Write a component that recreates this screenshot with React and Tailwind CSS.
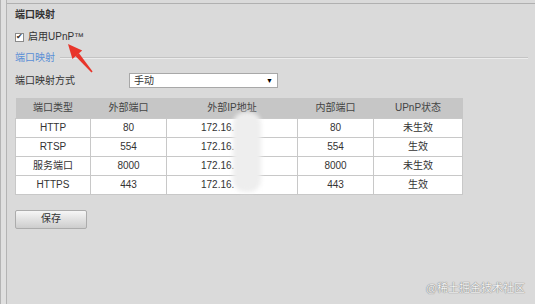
import React from "react";

const rows = [
  { type: "HTTP", ext: "80", ip: "172.16.", inner: "80", status: "未生效" },
  { type: "RTSP", ext: "554", ip: "172.16.", inner: "554", status: "生效" },
  { type: "服务端口", ext: "8000", ip: "172.16.", inner: "8000", status: "未生效" },
  { type: "HTTPS", ext: "443", ip: "172.16.", inner: "443", status: "生效" },
];

const font = { fontFamily: '"Liberation Sans", "Noto Sans CJK SC", sans-serif' };

// red annotation arrow pointing at the UPnP checkbox
const Arrow = () => (
  <svg className="absolute left-[62px] top-[38px]" width="36" height="40" viewBox="0 0 36 40">
    <polygon points="13.4,18.1 16.8,15.1 30.6,33.4 29.4,34.6" fill="#e8352a" />
    <polygon points="6,6 20.2,12.4 10.4,21" fill="#e8352a" />
  </svg>
);

export default function App() {
  return (
    <div
      className="relative flex w-[535px] h-[304px] bg-[#dadada] text-[#333] overflow-hidden"
      style={font}
    >
      {/* left frame edge */}
      <div className="w-[7px] h-full border-l border-r border-[#b4b4b4] bg-[#e0e0e0]" />

      <div className="flex-1 mt-[3px] border-t border-[#b0b0b0] pl-[8px]">
        <div className="mt-[4px] h-[14px] leading-[14px] text-[10px] font-bold">端口映射</div>

        <div className="mt-[8px] flex items-center h-[14px] gap-[4px]">
          <div className="w-[9px] h-[9px] border border-[#8a8a8a] bg-white flex items-center justify-center text-[8px] leading-none">
            ✔
          </div>
          <span className="text-[10px] leading-[14px]">启用UPnP™</span>
        </div>

        <div className="mt-[7px] flex items-center h-[14px]">
          <span className="text-[10px] leading-[14px] text-[#5a8fd6]">端口映射</span>
          <div className="ml-[5px] mr-[7px] flex-1 border-t border-[#c4c4c4] border-b border-b-[#ececec]" />
        </div>

        <div className="mt-[8px] flex items-center h-[15px]">
          <span className="w-[114px] text-[10px] leading-[14px]">端口映射方式</span>
          <div className="w-[149px] h-[15px] bg-white border border-[#a8a8a8] flex items-center justify-between px-[4px]">
            <span className="text-[10px] leading-none">手动</span>
            <span className="text-[7px] leading-none text-black">▼</span>
          </div>
        </div>

        <div className="relative mt-[10px] w-[447px]">
          <table className="border-collapse text-[10px] text-center table-fixed w-[447px]">
            <colgroup>
              <col className="w-[75px]" />
              <col className="w-[76px]" />
              <col className="w-[131px]" />
              <col className="w-[76px]" />
              <col className="w-[89px]" />
            </colgroup>
            <thead>
              <tr className="h-[20px] bg-[#c6c6c6] text-[#444]">
                <th className="font-normal">端口类型</th>
                <th className="font-normal">外部端口</th>
                <th className="font-normal">外部IP地址</th>
                <th className="font-normal">内部端口</th>
                <th className="font-normal">UPnP状态</th>
              </tr>
            </thead>
            <tbody>
              {rows.map((r) => (
                <tr key={r.type} className="h-[19px] bg-white">
                  <td className="border border-[#c8c8c8]">{r.type}</td>
                  <td className="border border-[#c8c8c8]">{r.ext}</td>
                  <td className="border border-[#c8c8c8] text-left pl-[34px]">{r.ip}</td>
                  <td className="border border-[#c8c8c8]">{r.inner}</td>
                  <td className="border border-[#c8c8c8]">{r.status}</td>
                </tr>
              ))}
            </tbody>
          </table>
          {/* blurred-out part of the IP addresses */}
          <div className="absolute left-[218px] top-[14px] w-[28px] h-[80px] bg-[#eeeeee] rounded-[12px] blur-[2px]" />
        </div>

        <button className="mt-[15px] w-[72px] h-[19px] rounded-[2px] border border-[#acacac] bg-gradient-to-b from-[#f6f6f6] to-[#cdcdcd] text-[10px] leading-none text-[#333]">
          保存
        </button>
      </div>

      <Arrow />

      <div
        className="absolute right-[10px] bottom-[10px] text-[11px] leading-none text-[#f2f2f2]"
        style={{ textShadow: "0 0 1px #7a7a7a, 0 0 1px #8a8a8a" }}
      >
        @稀土掘金技术社区
      </div>
    </div>
  );
}
